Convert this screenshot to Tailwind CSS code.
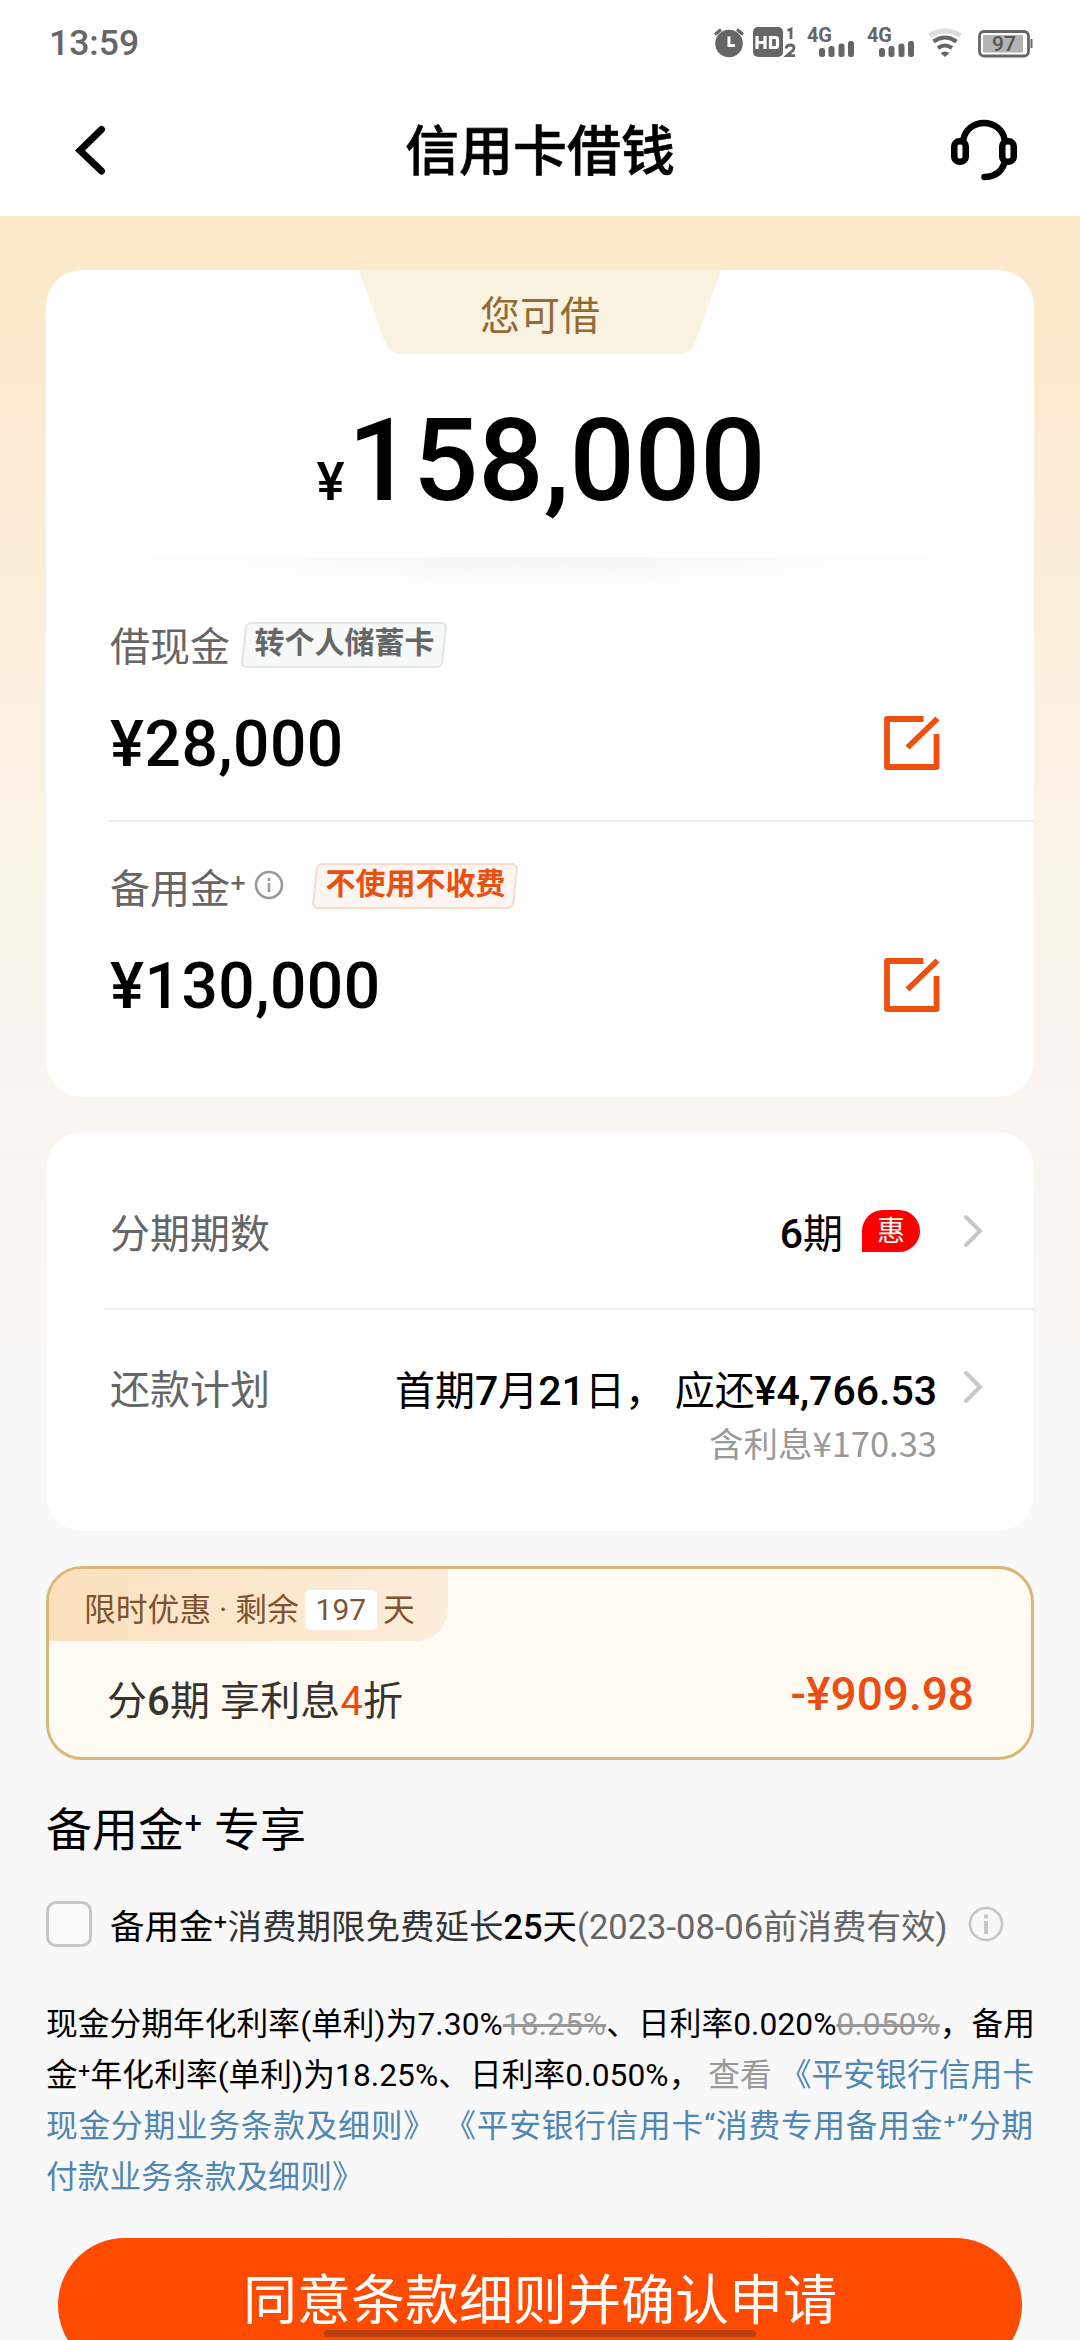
<!DOCTYPE html>
<html lang="zh-CN">
<head>
<meta charset="utf-8">
<title>信用卡借钱</title>
<script src="https://cdn.jsdelivr.net/npm/@tailwindcss/browser@4"></script>
</head>
<body class="w-[1080px] h-[2340px] overflow-hidden bg-[#f8f8f8] text-black font-['Roboto','Noto_Sans_CJK_SC',sans-serif]">
<div class="w-[1080px] h-[2340px] overflow-hidden flex flex-col">

  <!-- Status bar and title -->
  <header class="h-[216px] shrink-0 bg-white flex flex-col">
    <div class="h-[85px] pl-[49px] pr-[46px] flex items-center justify-between text-[#666]">
      <span class="text-[35.500px] leading-[36px] font-medium">13:59</span>
      <svg class="w-[320px] h-[85px]" viewBox="714 0 320 85" fill="#666">
        <circle cx="729" cy="43.500" r="13.8"/>
        <path d="M715 34.500l6-5M743 34.500l-6-5" stroke="#666" stroke-width="3" fill="none"/>
        <path d="M729 36.500v9h6" stroke="#fff" stroke-width="3" fill="none"/>
        <rect x="753" y="27" width="30" height="30" rx="5"/>
        <path d="M757 36v13M765 36v13M757 42.500h8M770.500 37.500h5q2 0 2 2v6q0 2-2 2h-5z" fill="none" stroke="#fff" stroke-width="3.200"/>
        <path d="M787.500 30.500l3.500-1.500v10M786 48.500q.5-3.500 4.200-3.500 3.800 0 3.800 3 0 2-3 4.200l-4 3.500h8" fill="none" stroke="#666" stroke-width="2.800"/>
        <text x="807" y="41.500" font-size="20" font-weight="700" font-family="Roboto" textLength="25">4G</text>
        <rect x="819" y="48" width="6" height="9" rx="2.500"/><rect x="828.500" y="46" width="6" height="11" rx="2.500"/><rect x="838.500" y="43.500" width="6" height="13.500" rx="2.500"/><rect x="848" y="41" width="6" height="16" rx="2.500"/>
        <text x="867" y="41.500" font-size="20" font-weight="700" font-family="Roboto" textLength="25">4G</text>
        <rect x="879" y="48" width="6" height="9" rx="2.500"/><rect x="888.500" y="46" width="6" height="11" rx="2.500"/><rect x="898.500" y="43.500" width="6" height="13.500" rx="2.500"/><rect x="908" y="41" width="6" height="16" rx="2.500"/>
        <path d="M929.500 35.500q15.500-9 31 0" fill="none" stroke="#ddd" stroke-width="5"/>
        <path d="M933.500 41.500q11.500-8 23 0M938 48q7-5 14 0" fill="none" stroke="#666" stroke-width="4"/>
        <path d="M940.500 53q4.500-3 9 0l-4.500 4z"/>
        <rect x="979.500" y="31.500" width="49" height="24.500" rx="4.500" fill="none" stroke="#666" stroke-width="2.800"/>
        <rect x="983" y="35" width="40" height="17.500" rx="1" fill="#b3b3b3"/>
        <rect x="1030.500" y="39" width="2" height="9"/>
        <text x="992" y="51" font-size="21" font-weight="500" fill="#555" font-family="Roboto" textLength="24">97</text>
      </svg>
    </div>
    <div class="h-[131px] px-[62px] flex items-center justify-between pb-[1px]">
      <svg class="w-[66px] h-[66px]" viewBox="0 0 66 66" fill="none" stroke="#000" stroke-width="7" stroke-linecap="round" stroke-linejoin="miter"><path d="M39.500 12.500L18 33.500l21.500 20.500"/></svg>
      <h1 class="text-[54px] leading-[60px] font-medium font-['Noto_Sans_CJK_SC'] -mt-[5px] pl-[2px] [-webkit-text-stroke:0.6px_black]">信用卡借钱</h1>
      <svg class="w-[68px] h-[66px]" viewBox="950 117 68 66" fill="none" stroke="#000" stroke-width="6.500" stroke-linecap="round">
        <path d="M963.500 139c2-10 11-16 20.500-16s18.500 6 20.500 16"/>
        <rect x="954.250" y="141.250" width="11.500" height="20.500" rx="5"/>
        <rect x="1002.250" y="141.250" width="11.500" height="20.500" rx="5"/>
        <path d="M1004 164c-2.500 8-10 13-19.500 13"/>
      </svg>
    </div>
  </header>

  <main class="flex-1 px-[46px] pt-[54px] bg-linear-to-b from-[#fde8c8] from-0% via-[#faf3e8] via-30% to-[#f8f8f8] to-54%">

    <!-- Credit amounts -->
    <section class="h-[827px] bg-white rounded-[36px] flex flex-col">
      <div class="h-[287px] shrink-0 flex flex-col items-center">
        <div class="relative w-[362px] h-[84px] flex items-center justify-center">
          <svg class="absolute inset-0 w-[362px] h-[84px]" viewBox="0 0 362 84" fill="#f9f2e1"><path d="M0 0H362L336 73Q332 84 320 84H42Q30 84 26 73Z"/></svg>
          <span class="relative text-[40px] leading-[50px] text-[#916b35] pt-[9px]">您可借</span>
        </div>
        <div class="h-[160px] flex items-baseline pt-[27px] font-medium pl-[2px]">
          <span class="text-[53px] leading-[120px]">¥</span>
          <span class="text-[115px] leading-[160px] ml-[3px]">158,000</span>
        </div>
      </div>
      <div class="h-[40px] shrink-0 mx-[30px] bg-radial-[ellipse_at_top] from-[#f6f6f6] to-white to-70%"></div>

      <div class="h-[225px] shrink-0 ml-[63px] border-b-2 border-[#ebedee] pr-[94px]">
        <div class="h-[94px] flex items-center">
          <span class="text-[40px] leading-[40px] text-[#666] pt-[7px] pl-[1px]">借现金</span>
          <span class="relative ml-[13px] w-[202px] h-[46px] flex items-center justify-center mt-[2px]">
            <span class="absolute inset-0 -skew-x-6 rounded-[6px] border-2 border-[#e3e5e5] bg-[#f7f8f8]"></span>
            <span class="relative text-[30px] leading-[30px] font-bold text-[#666] -mt-[5px] pl-[1px]">转个人储蓄卡</span>
          </span>
        </div>
        <div class="h-[104px] flex items-center justify-between">
          <span class="text-[64px] leading-[64px] tracking-[0.5px] font-medium pt-[3px] pl-[1px]">¥28,000</span>
          <svg class="w-[56px] h-[54px]" viewBox="0 0 56 54" fill="none" stroke="#f0500f" stroke-width="5.800"><path d="M39.500 3H3V51H52.500V18" stroke-linejoin="round"/><path d="M23.500 31.500L53.500 2.500"/></svg>
        </div>
      </div>

      <div class="ml-[63px] pr-[94px] pt-[17px]">
        <div class="h-[94px] flex items-center">
          <span class="text-[40px] leading-[40px] text-[#666] pt-[7px] pl-[1px]">备用金⁺</span>
          <svg class="w-[30px] h-[30px] ml-[8px] -mt-[2px]" viewBox="0 0 30 30" fill="none" stroke="#999" stroke-width="2.600"><circle cx="15" cy="15" r="13"/><path d="M15 13v9M15 8v3"/></svg>
          <span class="relative ml-[30px] w-[202px] h-[46px] flex items-center justify-center">
            <span class="absolute inset-0 -skew-x-6 rounded-[6px] border-2 border-[#fcd9cb] bg-[#fdf5f1]"></span>
            <span class="relative text-[30px] leading-[30px] font-bold text-[#e85010] -mt-[5px] pl-[1px]">不使用不收费</span>
          </span>
        </div>
        <div class="h-[104px] flex items-center justify-between">
          <span class="text-[64px] leading-[64px] tracking-[0.5px] font-medium pt-[3px] pl-[1px]">¥130,000</span>
          <svg class="w-[56px] h-[54px]" viewBox="0 0 56 54" fill="none" stroke="#f0500f" stroke-width="5.800"><path d="M39.500 3H3V51H52.500V18" stroke-linejoin="round"/><path d="M23.500 31.500L53.500 2.500"/></svg>
        </div>
      </div>
    </section>

    <!-- Instalments -->
    <section class="mt-[35px] h-[399px] bg-white rounded-[36px] text-[40px] leading-[40px]">
      <div class="h-[178px] ml-[58px] border-b-2 border-[#eee] pl-[6px] pr-[50px] pt-[29px] flex items-center">
        <span class="text-[#666] flex-1">分期期数</span>
        <span><b class="font-medium text-[41px]">6</b>期</span>
        <span class="ml-[19px] w-[58px] h-[42px] -mt-[7px] rounded-[21px] rounded-bl-none bg-[#fb0000] text-white text-[28px] leading-[43px] text-center">惠</span>
        <svg class="ml-[42px] -mt-[8px] w-[22px] h-[36px]" viewBox="0 0 22 36" fill="none" stroke="#c8c8c8" stroke-width="4" stroke-linecap="round"><path d="M4 4l14 14L4 32"/></svg>
      </div>
      <div class="ml-[64px] pr-[50px] pt-[61px] flex items-start">
        <span class="text-[#666] flex-1">还款计划</span>
        <div class="flex flex-col items-end">
          <span class="whitespace-pre">首期<b class="font-medium text-[41px]">7</b>月<b class="font-medium text-[41px]">21</b>日， 应还<b class="font-medium text-[41px]">¥4,766.53</b></span>
          <span class="mt-[10px] text-[34.500px] leading-[40px] text-[#999] font-['Noto_Sans_CJK_SC']">含利息¥170.33</span>
        </div>
        <svg class="ml-[25px] -mt-[2px] w-[22px] h-[36px]" viewBox="0 0 22 36" fill="none" stroke="#c8c8c8" stroke-width="4" stroke-linecap="round"><path d="M4 4l14 14L4 32"/></svg>
      </div>
    </section>

    <!-- Limited offer -->
    <section class="mt-[35px] h-[194px] rounded-[36px] border-[3px] border-[#dbb67a] bg-[#fffbf2] overflow-hidden">
      <div class="w-[399px] h-[72px] rounded-br-[32px] bg-linear-to-r from-[#fbe0bd] to-[#fbeedb] pl-[35px] pt-[9px] flex items-center text-[31.800px] leading-[40px] text-[#80522f]">
        <span class="whitespace-pre">限时优惠 · 剩余</span>
        <span class="ml-[6px] w-[72px] h-[40px] rounded-[5px] bg-white text-center text-[30px]">197</span>
        <span class="ml-[6px]">天</span>
      </div>
      <div class="h-[116px] pl-[58px] pr-[57px] flex items-center justify-between">
        <span class="text-[40px] leading-[40px] text-[#38332c] pt-[6px] tracking-[0.1px]">分<b class="font-medium">6</b>期 享利息<span class="text-[#f4480a]">4</span>折</span>
        <span class="text-[46px] leading-[46px] font-medium text-[#ea4e12] -mt-[10px]">-¥909.98</span>
      </div>
    </section>

    <h2 class="mt-[42px] text-[46px] leading-[56px]">备用金⁺ 专享</h2>

    <div class="mt-[38px] h-[56px] flex items-center">
      <span class="w-[46px] h-[46px] rounded-[10px] border-[3px] border-[#c6c6c6] bg-[#fafafa]"></span>
      <span class="ml-[18px] text-[34.500px] leading-[40px] whitespace-nowrap pt-[5px]"><span>备用金⁺</span><span class="text-[#333]">消费期限免费延长</span><b class="font-medium">25</b>天<span class="text-[#666]">(2023-08-06前消费有效)</span></span>
      <svg class="ml-[20px] w-[36px] h-[36px]" viewBox="0 0 36 36" fill="none" stroke="#c6c6c6" stroke-width="2.600"><circle cx="18" cy="18" r="16"/><path d="M18 15v13M18 8.500v4" stroke-width="4"/></svg>
    </div>

    <!-- Terms -->
    <div class="mt-[47px] text-[31.700px] leading-[51px] tracking-[0.08px]">
      <div class="h-[51px] whitespace-pre">现金分期年化利率(单利)为7.30%<s class="text-[#999]">18.25%</s>、日利率0.020%<s class="text-[#999]">0.050%</s>，备用</div>
      <div class="h-[51px] whitespace-pre">金⁺年化利率(单利)为18.25%、日利率0.050%， <span class="text-[#999]">查看</span><span class="text-[#4f86b2]"> 《平安银行信用卡</span></div>
      <div class="h-[51px] whitespace-pre tracking-[0.78px] text-[#4f86b2]">现金分期业务条款及细则》 《平安银行信用卡“消费专用备用金⁺”分期</div>
      <div class="h-[51px] whitespace-pre text-[#4f86b2]">付款业务条款及细则》</div>
    </div>

    <button class="relative mt-[35px] ml-[12px] w-[964px] h-[134px] rounded-full bg-[#ff4b00] text-white text-[54px] leading-[54px] pb-[7px] flex items-center justify-center">
      同意条款细则并确认申请
      <span class="absolute left-[266px] top-[92px] w-[432px] h-[7px] rounded-full bg-[#bb3f10]"></span>
    </button>
  </main>
</div>
</body>
</html>
